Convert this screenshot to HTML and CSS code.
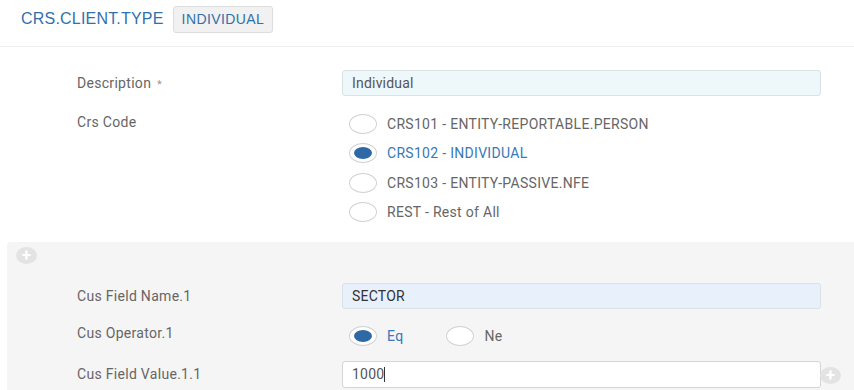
FILE: index.html
```html
<!DOCTYPE html>
<html lang="en">
<head>
    <meta charset="UTF-8">
    <title>CRS.CLIENT.TYPE</title>
    <link rel="stylesheet" href="styles.css">
</head>
<body>

    <div class="page-header">
        <span class="page-title">CRS.CLIENT.TYPE</span>
        <span class="record-id">INDIVIDUAL</span>
    </div>

    <div class="form-body">
        <div class="form-row">
            <label class="field-label">Description <span class="req">*</span></label>
            <div class="field">
                <div class="input input-readonly">Individual</div>
            </div>
        </div>

        <div class="form-row row-top">
            <label class="field-label">Crs Code</label>
            <div class="field radio-list">
                <div class="radio"><span class="dot"></span><span class="radio-text">CRS101 - ENTITY-REPORTABLE.PERSON</span></div>
                <div class="radio checked"><span class="dot"></span><span class="radio-text">CRS102 - INDIVIDUAL</span></div>
                <div class="radio"><span class="dot"></span><span class="radio-text">CRS103 - ENTITY-PASSIVE.NFE</span></div>
                <div class="radio"><span class="dot"></span><span class="radio-text">REST - Rest of All</span></div>
            </div>
        </div>
    </div>

    <div class="group-panel">
        <span class="add-btn panel-add">+</span>

        <div class="form-row">
            <label class="field-label">Cus Field Name.1</label>
            <div class="field">
                <div class="input input-select">SECTOR</div>
            </div>
        </div>

        <div class="form-row operator-row">
            <label class="field-label">Cus Operator.1</label>
            <div class="field radio-inline">
                <div class="radio checked"><span class="dot"></span><span class="radio-text">Eq</span></div>
                <div class="radio"><span class="dot"></span><span class="radio-text">Ne</span></div>
            </div>
        </div>

        <div class="form-row">
            <label class="field-label">Cus Field Value.1.1</label>
            <div class="field">
                <div class="input input-edit">1000<span class="caret"></span></div>
            </div>
            <span class="add-btn row-add">+</span>
        </div>
    </div>

</body>
</html>
```

FILE: styles.css
```css
body {
    margin: 0;
    height: 390px;
    display: flex;
    flex-direction: column;
    font-family: Roboto, 'Liberation Sans', sans-serif;
    font-size: 14px;
    letter-spacing: 0.3px;
    color: #666;
    background-color: #fff;
    overflow: hidden;
}

.page-header {
    display: flex;
    align-items: center;
    height: 47px;
    padding-left: 21px;
    padding-bottom: 8px;
    border-bottom: 1px solid #eee;
    box-sizing: border-box;
    flex-shrink: 0;
}

.page-title {
    font-family: 'Liberation Sans', Arial, sans-serif;
    font-size: 16px;
    letter-spacing: 0.2px;
    color: #3270ac;
    margin-right: 9px;
}

.record-id {
    font-family: 'Liberation Sans', Arial, sans-serif;
    font-size: 14px;
    letter-spacing: 0.4px;
    color: #3270ac;
    background-color: #f1f1f1;
    border: 1px solid #ddd;
    border-radius: 3px;
    padding: 4px 8px 5px 8px;
}

.form-body {
    padding-top: 23px;
}

.form-row {
    display: flex;
    align-items: center;
    margin-bottom: 18px;
}

.form-row.row-top {
    align-items: flex-start;
    margin-bottom: 0;
}

.field-label {
    width: 265px;
    padding-left: 77px;
    flex-shrink: 0;
    color: #666;
}

.req {
    color: #999;
    font-size: 11px;
    margin-left: 2px;
}

.field {
    width: 479px;
}

.input {
    height: 26px;
    box-sizing: border-box;
    border: 1px solid #dbe2e6;
    border-radius: 3px;
    padding: 0 9px;
    line-height: 24px;
    color: #555;
    letter-spacing: 0.2px;
}

.input-readonly {
    background-color: #eef7fa;
}

.input-select {
    background-color: #e8f0fc;
    color: #333;
}

.input-edit {
    background-color: #fff;
    border-color: #d4d4d4;
    height: 27px;
}

.caret {
    display: inline-block;
    width: 1px;
    height: 15px;
    background-color: #333;
    vertical-align: -3px;
}

.radio-list {
    display: flex;
    flex-direction: column;
    gap: 9.3px;
    padding-left: 7px;
}

.radio {
    display: flex;
    align-items: center;
    height: 20px;
}

.dot {
    width: 26px;
    height: 18px;
    border: 1px solid #d2d2d2;
    border-radius: 50%;
    background-color: #fff;
    margin-right: 10px;
    display: flex;
    align-items: center;
    justify-content: center;
}

.radio.checked .dot::after {
    content: "";
    width: 18px;
    height: 12px;
    border-radius: 50%;
    background-color: #2e69a5;
}

.radio.checked .radio-text {
    color: #3a78b6;
}

.radio-inline {
    display: flex;
    gap: 43px;
    padding-left: 7px;
    margin-top: 3px;
}

.group-panel {
    flex: 1;
    margin: 20px 0 0 7px;
    background-color: #f5f5f5;
    border-radius: 4px 0 0 0;
    padding-top: 5px;
}

.group-panel .field-label {
    padding-left: 70px;
}

.group-panel .form-row {
    margin-bottom: 14px;
}

.group-panel .operator-row {
    align-items: flex-start;
    margin-bottom: 15px;
}

.operator-row .field-label {
    margin-top: 2px;
}

.add-btn {
    display: inline-flex;
    align-items: center;
    justify-content: center;
    width: 21px;
    height: 17px;
    border-radius: 50%;
    background-color: #e3e3e3;
    color: #fff;
    font-size: 17px;
    font-weight: bold;
    line-height: 1;
}

.panel-add {
    margin-left: 9px;
    margin-bottom: 19px;
}

.row-add {
    margin-top: 2px;
    margin-left: -1px;
}
```
